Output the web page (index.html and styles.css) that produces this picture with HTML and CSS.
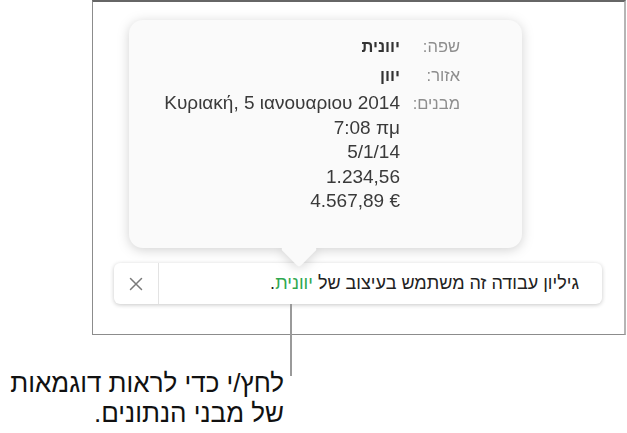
FILE: index.html
```html
<!DOCTYPE html>
<html lang="he" dir="rtl">
<head>
    <meta charset="UTF-8">
    <meta name="viewport" content="width=device-width, initial-scale=1.0">
    <title>מבני נתונים</title>
    <link rel="stylesheet" href="styles.css">
</head>
<body>
    <div class="page">
        <div class="frame">
            <!-- חלון מבני הנתונים -->
            <div class="popover">
                <dl class="formats">
                    <dt>שפה:</dt>
                    <dd class="strong">יוונית</dd>
                    <dt>אזור:</dt>
                    <dd class="strong">יוון</dd>
                    <dt>מבנים:</dt>
                    <dd class="samples">
                        <span dir="ltr">Κυριακή, 5 ιανουαριου 2014</span>
                        <span dir="ltr">7:08 πμ</span>
                        <span dir="ltr">5/1/14</span>
                        <span dir="ltr">1.234,56</span>
                        <span dir="ltr">4.567,89 €</span>
                    </dd>
                </dl>
            </div>

            <!-- פס ההודעה -->
            <div class="notice">
                <div class="notice-text">גיליון עבודה זה משתמש בעיצוב של <span class="lang">יוונית</span>.</div>
                <button class="notice-close" type="button" aria-label="סגור">
                    <svg width="14" height="14" viewBox="0 0 14 14">
                        <path d="M1.5 1.5 L12.5 12.5 M12.5 1.5 L1.5 12.5" stroke="#7a7a7a" stroke-width="1.5" fill="none" stroke-linecap="round"/>
                    </svg>
                </button>
            </div>
        </div>

        <div class="callout">
            <p>לחץ/י כדי לראות דוגמאות<br>של מבני הנתונים.</p>
        </div>
        <div class="leader"></div>
    </div>
</body>
</html>
```

FILE: styles.css
```css
* {
    margin: 0;
    padding: 0;
    box-sizing: border-box;
}

body {
    font-family: 'Liberation Sans', Arial, sans-serif;
    background: white;
    color: #1e1e1e;
}

.page {
    position: relative;
    width: 627px;
    height: 433px;
    overflow: hidden;
    direction: ltr;
}

.frame {
    width: 534px;
    height: 335px;
    margin-left: 92px;
    border: 1px solid #8c8c8c;
    border-top: 2px solid #666;
    border-right: 2px solid #b5b5b5;
    padding-top: 18px;
}

.popover {
    position: relative;
    margin-left: 36px;
    width: 393px;
    height: 228px;
    background: #fafafa;
    border-radius: 14px;
    filter: drop-shadow(0 2px 6px rgba(0, 0, 0, 0.18));
    direction: rtl;
    padding: 14px 62px 0 0;
}

.popover::after {
    content: "";
    position: absolute;
    left: 157px;
    bottom: -14px;
    width: 26px;
    height: 26px;
    background: #fafafa;
    border-radius: 3px;
    transform: rotate(45deg);
}

.formats {
    display: grid;
    grid-template-columns: 52px auto;
    justify-content: start;
    column-gap: 8px;
    row-gap: 4px;
    line-height: 24.5px;
}

.formats dt {
    color: #8e8e8e;
    font-size: 16.5px;
}

.formats dd {
    color: #3a3a3a;
    font-size: 19px;
}

.formats dd.strong {
    font-weight: bold;
    font-size: 16.5px;
    color: #333;
}

.samples span {
    display: block;
    text-align: right;
}

.notice {
    margin: 15px 0 0 21px;
    width: 488px;
    height: 41px;
    background: white;
    border-radius: 6px;
    box-shadow: 0 1px 4px rgba(0, 0, 0, 0.22);
    display: flex;
    direction: rtl;
    align-items: stretch;
}

.notice-text {
    flex: 1;
    padding-right: 23px;
    font-size: 18px;
    line-height: 41px;
    color: #222;
}

.notice-text .lang {
    color: #2fa84f;
}

.notice-close {
    width: 45px;
    border: none;
    border-right: 1px solid #e3e3e3;
    background: none;
    display: flex;
    align-items: center;
    justify-content: center;
}

.callout {
    width: 284px;
    margin-top: 33px;
    direction: rtl;
    font-size: 26px;
    line-height: 30px;
    color: #111;
}

.leader {
    position: absolute;
    left: 290px;
    top: 304px;
    width: 2px;
    height: 72px;
    background: #9a9a9a;
}
```
